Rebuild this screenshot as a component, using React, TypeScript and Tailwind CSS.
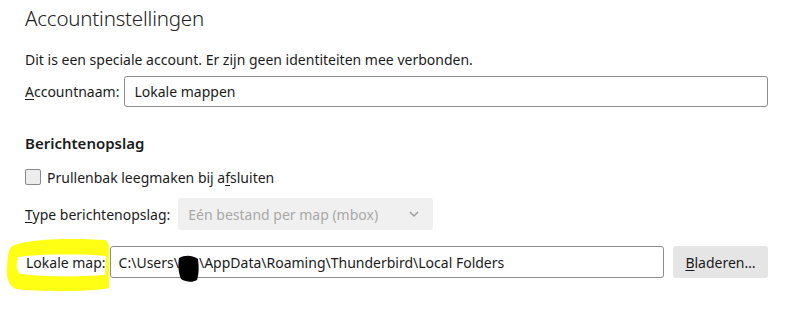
import React from "react";

export default function App() {
  const font = { fontFamily: '"Noto Sans", "Open Sans", sans-serif' };
  return (
    <div className="relative w-[804px] h-[316px] bg-white text-[#1b1b1b] overflow-hidden" style={font}>
      <div className="flex flex-col pl-[25px] pr-[36px]">
        <div className="h-[36px] flex items-center text-[20.5px] font-light text-[#222] tracking-[-0.2px]">
          Accountinstellingen
        </div>
        <div className="mt-[13px] h-[20px] flex items-center text-[14px]">
          Dit is een speciale account. Er zijn geen identiteiten mee verbonden.
        </div>
        <div className="mt-[7px] flex items-center gap-[5px] text-[14px]">
          <span>
            <span className="underline underline-offset-2">A</span>ccountnaam:
          </span>
          <div className="flex-1 h-[31px] border border-[#8d8d8d] rounded-[3px] flex items-center px-[9px]">
            Lokale mappen
          </div>
        </div>
        <div className="mt-[26px] h-[20px] flex items-center text-[15px] font-semibold">
          Berichtenopslag
        </div>
        <div className="mt-[14px] h-[20px] flex items-center gap-[6px] text-[14px]">
          <span className="w-[16px] h-[16px] border border-[#8a8a8a] bg-[#ececec] rounded-[2px]" />
          <span>
            Prullenbak leegmaken bij a<span className="underline underline-offset-2">f</span>sluiten
          </span>
        </div>
        <div className="mt-[11px] flex items-center gap-[8px] text-[14px]">
          <span>
            <span className="underline underline-offset-2">T</span>ype berichtenopslag:
          </span>
          <div className="w-[255px] h-[32px] bg-[#f0f0f0] rounded-[3px] flex items-center justify-between pl-[10px] pr-[14px] text-[#a8a8a8]">
            <span>Eén bestand per map (mbox)</span>
            <svg width="10" height="6" viewBox="0 0 10 6" fill="none">
              <path d="M1 1l4 4 4-4" stroke="#9a9a9a" strokeWidth="1.3" />
            </svg>
          </div>
        </div>
        <div className="mt-[16px] flex items-center text-[14px]">
          <span className="pl-[1px]">Lokale map:</span>
          <div className="ml-[4px] flex-1 h-[32px] border border-[#8d8d8d] rounded-[3px] flex items-center px-[8px]">
            C:\Users\<span className="inline-block w-[20px]" />\AppData\Roaming\Thunderbird\Local Folders
          </div>
          <div className="ml-[9px] w-[95px] h-[32px] bg-[#e5e5e5] rounded-[3px] flex items-center justify-center">
            <span>
              <span className="underline underline-offset-2">B</span>laderen…
            </span>
          </div>
        </div>
      </div>
      <svg className="absolute left-0 top-0 pointer-events-none" width="804" height="316">
        <path
          d="M12 246 C30 238 75 238 106 240 L109 246 L109 288 C90 292 40 292 16 289 C8 286 6 276 7 266 C8 256 8 250 12 246 Z M18 257 C16 264 16 270 20 274 C45 277 80 277 105 275 L106 256 C80 254 40 254 18 257 Z"
          fill="#ffff14"
          fillRule="evenodd"
        />
        <path
          d="M179 258 C186 254 194 256 198 259 C199 266 199 274 197 280 C192 283 186 282 181 279 C178 272 178 264 179 258 Z"
          fill="#000"
        />
      </svg>
    </div>
  );
}
